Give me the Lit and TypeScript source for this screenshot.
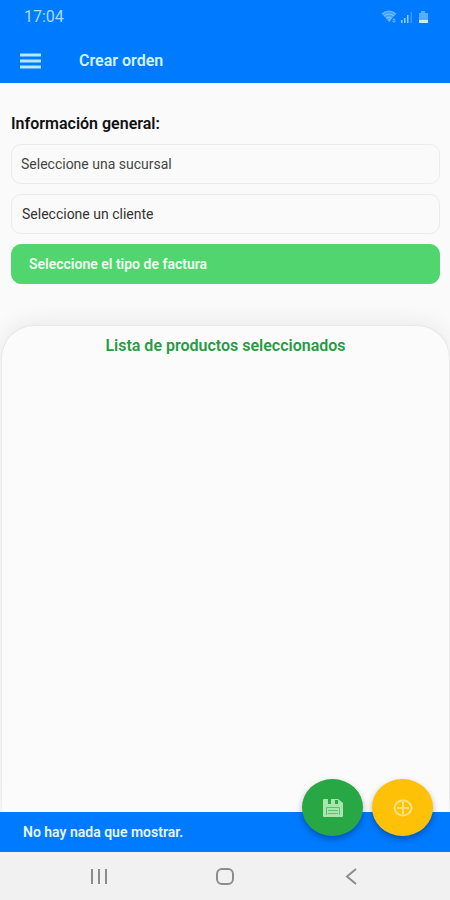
import { LitElement, html, css } from "lit";
import { customElement, state } from "lit/decorators.js";

@customElement("status-bar")
class StatusBar extends LitElement {
  static styles = css`
    :host {
      display: flex;
      align-items: center;
      justify-content: space-between;
      height: 34px;
      padding: 0 20px 0 24px;
      color: #a9dcff;
      font-size: 16px;
      line-height: 20px;
    }
    .icons {
      display: block;
    }
  `;
  render() {
    return html`
      <time>17:04</time>
      <svg class="icons" width="50" height="16" viewBox="0 0 50 16" fill="#8fd0fb" aria-hidden="true">
        <path d="M2 5Q9 -1 16 5L9 13Z" opacity=".45" />
        <path d="M2 5Q9 -1 16 5M4 7Q9 3 14 7M6.500 9.500Q9 7 11.500 9.500" fill="none" stroke="#8fd0fb" stroke-width="1.200" opacity=".7" />
        <path d="M8 10h3l-1.500 3zM14 9l2 2.500h-4zM14 14l-2-2h4z" opacity=".6" />
        <path d="M21 11h1.500v3H21zM24 9h1.500v5H24zM27 6h1.500v8H27z" />
        <path d="M30.500 3h1.500v11h-1.500z" opacity=".4" />
        <path d="M41 2h4v2h3v8h-9V4h2z" opacity=".6" />
        <path d="M39 11h9v3h-9z" fill="#c4ecff" />
      </svg>
    `;
  }
}

@customElement("android-nav")
class AndroidNav extends LitElement {
  static styles = css`
    :host {
      display: grid;
      grid-template-columns: repeat(3, 126px);
      justify-content: center;
      height: 48px;
      background: #f1f1f1;
    }
    .key {
      display: flex;
      align-items: center;
      justify-content: center;
      padding: 0;
      border: 0;
      background: none;
    }
  `;
  render() {
    return html`
      <button class="key" aria-label="Recientes">
        <svg width="20" height="20" viewBox="0 0 20 20" fill="none" stroke="#8c8c8c" stroke-width="2">
          <path d="M3 3v15M10 3v15M17 3v15" />
        </svg>
      </button>
      <button class="key" aria-label="Inicio">
        <svg width="20" height="20" viewBox="0 0 20 20" fill="none" stroke="#8c8c8c" stroke-width="2">
          <rect x="2" y="3" width="16" height="15" rx="5" />
        </svg>
      </button>
      <button class="key" aria-label="Atrás">
        <svg width="20" height="20" viewBox="0 0 20 20" fill="none" stroke="#8c8c8c" stroke-width="2">
          <path d="M15 3L6 10.500L15 18" />
        </svg>
      </button>
    `;
  }
}

@customElement("app-root")
class AppRoot extends LitElement {
  static styles = css`
    :host {
      display: flex;
      flex-direction: column;
      min-height: 100vh;
      background: #fafafa;
      font-family: Roboto, "Liberation Sans", sans-serif;
      font-size: 14px;
      line-height: 20px;
      color: #111;
    }
    .top {
      background: #007aff;
    }
    .toolbar {
      display: flex;
      align-items: center;
      gap: 38px;
      padding: 5px 20px 0;
      height: 44px;
    }
    .menu {
      display: flex;
      padding: 0;
      border: 0;
      background: none;
    }
    .title {
      margin: 0;
      font-size: 16px;
      font-weight: 600;
      color: #d3f2ff;
    }
    .form {
      display: grid;
      gap: 10px;
      padding: 31px 10px 42px 11px;
    }
    .heading {
      margin: 0;
      font-size: 16px;
      font-weight: 600;
    }
    .field {
      appearance: none;
      box-sizing: border-box;
      width: 100%;
      height: 40px;
      margin: 0;
      padding: 0 9px;
      border: 1px solid #ebebeb;
      border-radius: 10px;
      background: #fafafa;
      font: inherit;
      color: #444;
    }
    .field.client {
      color: #333;
      padding: 0 10px;
    }
    .field.invoice {
      padding: 0 17px;
      border-color: #51d66f;
      background: #51d66f;
      color: #effff0;
      font-weight: 600;
    }
    .list {
      flex: 1;
      margin: 0 1px 0 2px;
      padding-top: 10px;
      border-radius: 32px 32px 0 0;
      background: #fbfbfb;
      box-shadow: 0 0 2px rgba(0, 0, 0, 0.12), 0 -4px 22px rgba(0, 0, 0, 0.07);
      text-align: center;
    }
    .list-title {
      margin: 0;
      font-size: 16px;
      font-weight: 600;
      color: #269c43;
    }
    .footer {
      position: relative;
      display: flex;
      align-items: center;
      height: 40px;
      padding: 0 23px;
      background: #007aff;
      color: #e6f8ff;
      font-weight: 600;
    }
    .message {
      margin: 0;
    }
    .actions {
      position: absolute;
      right: 17px;
      bottom: 16px;
      display: flex;
      gap: 9px;
    }
    .fab {
      display: flex;
      align-items: center;
      justify-content: center;
      width: 61px;
      height: 57px;
      padding: 0;
      border: 0;
      border-radius: 50%;
      background: #28a745;
      box-shadow: 0 3px 6px rgba(0, 0, 0, 0.3);
    }
    .fab.add {
      background: #ffc107;
    }
  `;

  @state() private message = "No hay nada que mostrar.";

  render() {
    return html`
      <header class="top">
        <status-bar></status-bar>
        <div class="toolbar">
          <button class="menu" aria-label="Menú">
            <svg width="21" height="16" viewBox="0 0 21 16" stroke="#b5e8ff" stroke-width="3">
              <path d="M0 2h21M0 8h21M0 14h21" />
            </svg>
          </button>
          <h1 class="title">Crear orden</h1>
        </div>
      </header>
      <section class="form">
        <h2 class="heading">Información general:</h2>
        <select class="field" aria-label="Sucursal">
          <option>Seleccione una sucursal</option>
        </select>
        <select class="field client" aria-label="Cliente">
          <option>Seleccione un cliente</option>
        </select>
        <select class="field invoice" aria-label="Tipo de factura">
          <option>Seleccione el tipo de factura</option>
        </select>
      </section>
      <section class="list">
        <h2 class="list-title">Lista de productos seleccionados</h2>
      </section>
      <footer class="footer">
        <p class="message">${this.message}</p>
        <div class="actions">
          <button class="fab" aria-label="Guardar">
            <svg width="20" height="18" viewBox="0 0 20 18">
              <path fill="#a9e6ae" d="M1 0h14l5 4v13q0 1-1 1H1q-1 0-1-1V1q0-1 1-1z" />
              <path fill="#28a745" d="M5 0h3v5H5zM12 1h3v4h-3z" />
              <path fill="none" stroke="#5cc070" d="M3.500 16V8.500h13V16M5 11.500h10M5 14.500h10" />
            </svg>
          </button>
          <button class="fab add" aria-label="Agregar">
            <svg width="20" height="18" viewBox="0 0 20 18" fill="none" stroke="#ffe27a" stroke-width="2">
              <ellipse cx="10" cy="9" rx="8.500" ry="7.500" />
              <path d="M10 3v12M4 9h12" />
            </svg>
          </button>
        </div>
      </footer>
      <android-nav></android-nav>
    `;
  }
}
